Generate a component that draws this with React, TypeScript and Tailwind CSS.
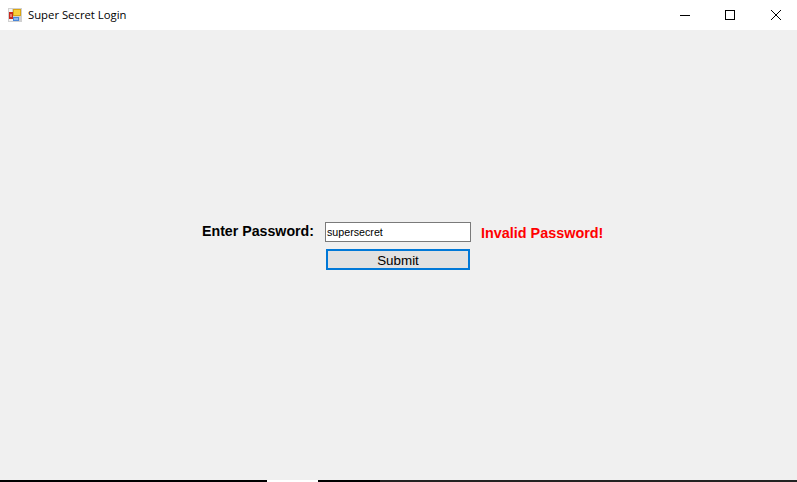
export default function App() {
  return (
    <div className="w-[797px] h-[482px] flex flex-col overflow-hidden bg-[#f0f0f0] font-['Liberation_Sans',sans-serif]">
      <div className="h-[30px] bg-white flex items-center shrink-0">
        <svg className="ml-[8px] mb-[1px]" width="14" height="14" viewBox="0 0 14 14">
          <rect x="0" y="0" width="14" height="14" fill="#d0d0d0" />
          <rect x="1" y="1" width="3" height="3" fill="#f4f4f4" />
          <rect x="1" y="11" width="4" height="2" fill="#f4f4f4" />
          <rect x="1" y="4" width="4" height="7" fill="#c8281e" />
          <rect x="2" y="6" width="2" height="3" fill="#e88070" />
          <rect x="5" y="1" width="8" height="7" fill="#d9a514" />
          <rect x="6" y="2" width="6" height="5" fill="#f8cf3c" />
          <rect x="5" y="9" width="6" height="4" fill="#4a86d8" />
          <rect x="6" y="10" width="4" height="2" fill="#8fb8ee" />
        </svg>
        <span className="ml-[6px] text-[11.3px] text-black font-['Open_Sans',sans-serif]">Super Secret Login</span>
        <div className="ml-auto mr-[-2px] flex h-full items-center">
          <div className="w-[46px] flex justify-center">
            <svg width="10" height="10" viewBox="0 0 10 10"><path d="M0 5.5H10" stroke="black" strokeWidth="1" /></svg>
          </div>
          <div className="w-[46px] flex justify-center ml-[-1px]">
            <svg width="10" height="10" viewBox="0 0 10 10"><rect x="0.5" y="0.5" width="9" height="9" fill="none" stroke="black" strokeWidth="1" /></svg>
          </div>
          <div className="w-[46px] flex justify-center">
            <svg width="10" height="10" viewBox="0 0 10 10"><path d="M0 0L10 10M10 0L0 10" stroke="black" strokeWidth="1" /></svg>
          </div>
        </div>
      </div>
      <div className="flex-1 pt-[192px] pl-[202px]">
        <div className="flex items-start">
          <span className="w-[123px] h-[20px] leading-[19px] text-[14.2px] font-bold text-black">Enter Password:</span>
          <div className="w-[146px] h-[20px] bg-white border border-[#7a7a7a] text-[10.7px] text-black leading-[18px] pl-[1px]">supersecret</div>
          <span className="ml-[10px] mt-[3px] text-[14.4px] leading-[17px] font-bold text-[#ff0000]">Invalid Password!</span>
        </div>
        <button className="block ml-[124px] mt-[7px] w-[144px] h-[21px] bg-[#e1e1e1] border-2 border-[#0078d7] text-[13.4px] leading-none text-black pt-[2px]">Submit</button>
      </div>
      <div className="h-[2px] shrink-0 flex bg-[#222222]">
        <div className="w-[267px] bg-black" />
        <div className="w-[51px] bg-white" />
        <div className="w-[62px] bg-black" />
      </div>
    </div>
  );
}
